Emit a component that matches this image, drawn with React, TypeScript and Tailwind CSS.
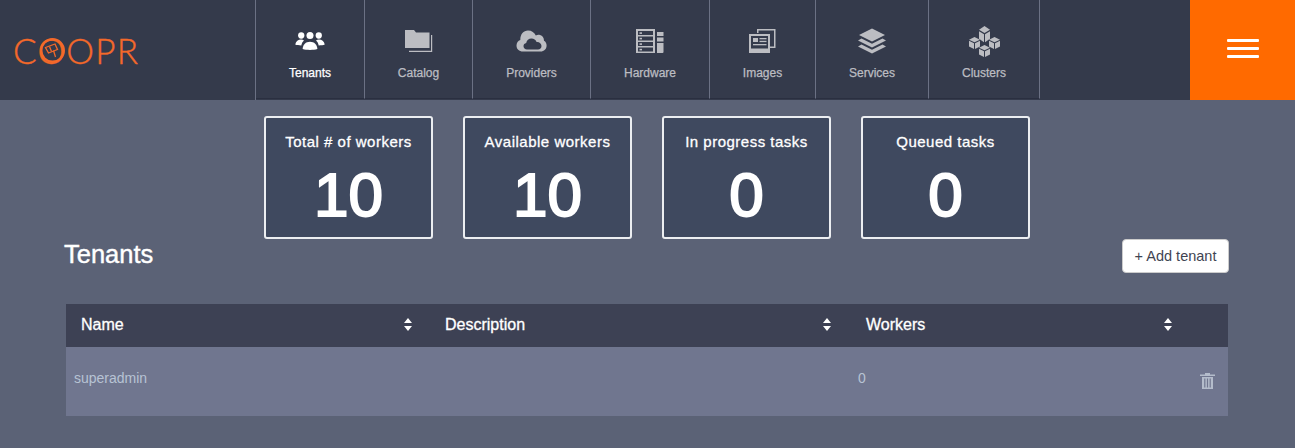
import React from 'react';

const UsersIcon = () => (
  <svg width="30" height="18" viewBox="0 0 32 19.500" fill="currentColor">
    <circle cx="6.500" cy="3.800" r="3.400" />
    <circle cx="16" cy="3.800" r="3.800" />
    <circle cx="25.500" cy="3.800" r="3.400" />
    <path d="M0 13.500c.8-3.400 3.200-5.300 6.300-5.300 1.200 0 2.300.3 3.200.9-1.500 1.300-2.500 3-2.900 5.400-2.700 0-5-.3-6.600-1z" />
    <path d="M32 13.500c-.8-3.400-3.200-5.300-6.300-5.300-1.200 0-2.300.3-3.200.9 1.500 1.300 2.500 3 2.900 5.400 2.700 0 5-.3 6.600-1z" />
    <path d="M8 18.500c.3-5 3.400-8 8-8s7.700 3 8 8c-2.200.7-5 1-8 1s-5.800-.3-8-1z" />
  </svg>
);

const FolderIcon = () => (
  <svg width="29" height="24" viewBox="0 0 29 24" fill="currentColor">
    <path d="M1 1h9l2 2.500h13.500V19H1z" />
    <path d="M27 6h1.200v17H5v-1.300h22z" />
  </svg>
);

const CloudIcon = () => (
  <svg width="31" height="24" viewBox="0 0 31 24" fill="currentColor">
    <path d="M7 22.500C3 22.500.5 20 .5 16.500c0-2.800 1.500-4.800 3.800-5.600C4.300 5 7.500 1.500 12 1.500c3.700 0 6.500 2 7.800 5 1.100-.6 2.300-.9 3.500-.7 3 .5 4.700 3 4.700 6 1.700.9 2.600 2.600 2.600 4.700 0 3.500-2.500 6-6 6z" />
    <path
      fill="#343a4b"
      d="M11 20.500c-2 0-3.500-1.300-3.500-3.200 0-1.700 1.100-2.900 2.700-3.200.4-2.700 2.500-4.600 5.300-4.600 2.400 0 4.300 1.400 5.100 3.500 2.600-.3 4.900 1.400 4.900 4.100 0 2-1.500 3.400-3.500 3.400z"
    />
  </svg>
);

const HardwareIcon = () => (
  <svg width="28" height="26" viewBox="0 0 28 26" fill="currentColor">
    <path
      fillRule="evenodd"
      d="M0 1h19v24H0zM2 3v4h15V3zm0 5.500v4h15v-4zm0 5.500v4h15v-4zm0 5.500v4h15v-4z"
    />
    <rect x="3.500" y="4.300" width="2.500" height="1.600" />
    <rect x="3.500" y="9.800" width="2.500" height="1.600" />
    <rect x="3.500" y="15.300" width="2.500" height="1.600" />
    <rect x="3.500" y="20.800" width="2.500" height="1.600" />
    <path d="M21 4h6.500v4H21zM21 9.500h6.500v4H21zM21 15h6.500v9a1 1 0 0 1-1 1H21z" />
  </svg>
);

const ImagesIcon = () => (
  <svg width="27" height="26" viewBox="0 0 27 26" fill="currentColor">
    <path d="M8 1h18.500v19H21v-1.500h4V2.500H9.500V5H8z" />
    <path fillRule="evenodd" d="M0 6h21v19H0zM2 8v12.500h17V8z" />
    <rect x="4" y="10" width="5" height="4" />
    <rect x="10.500" y="10" width="7" height="1.300" />
    <rect x="10.500" y="12.800" width="7" height="1.300" />
    <rect x="4" y="16" width="13.500" height="1.300" />
  </svg>
);

const LayersIcon = () => (
  <svg width="30" height="26" viewBox="0 0 30 26" fill="currentColor">
    <path d="M15 .5 28 7l-13 6.500L2 7z" />
    <path d="M4.500 10.600 1 12.500l14 7 14-7-3.500-1.900L15 15.800z" />
    <path d="M4.500 16.600 1 18.500l14 7 14-7-3.500-1.900L15 21.800z" />
  </svg>
);

const Cube = ({ x, y, tall }: { x: number; y: number; tall?: boolean }) => (
  <g transform={`translate(${x} ${y}) scale(1 ${tall ? 1.35 : 1})`}>
    <path d="M5.500 0 11 2.700 5.500 5.200 0 2.700z" />
    <path d="M0 3.800 5 6.200V12L0 9.400z" />
    <path d="M11 3.800 6 6.200V12l5-2.600z" />
  </g>
);

const ClustersIcon = () => (
  <svg width="31" height="31" viewBox="0 0 31 31" fill="currentColor">
    <Cube x={10} y={0} tall />
    <Cube x={0} y={11} />
    <Cube x={20} y={11} />
    <Cube x={10} y={19} />
  </svg>
);

const SortIcon = () => (
  <svg width="8" height="13" viewBox="0 0 8 13" fill="currentColor">
    <path d="M4 0 8 5H0zM4 13 0 8h8z" />
  </svg>
);

const TrashIcon = () => (
  <svg width="15" height="16" viewBox="0 0 15 16" fill="currentColor">
    <path d="M5 0h5v1.500h5V3H0V1.500h5z" />
    <path
      fillRule="evenodd"
      d="M2 4h11v12H2zM4.200 5.500v9h1.200v-9zm2.700 0v9h1.200v-9zm2.700 0v9h1.200v-9z"
    />
  </svg>
);

const navItems = [
  { label: 'Tenants', icon: <UsersIcon />, width: 'w-[109px]', active: true },
  { label: 'Catalog', icon: <FolderIcon />, width: 'w-[108px]' },
  { label: 'Providers', icon: <CloudIcon />, width: 'w-[118px]' },
  { label: 'Hardware', icon: <HardwareIcon />, width: 'w-[119px]' },
  { label: 'Images', icon: <ImagesIcon />, width: 'w-[106px]' },
  { label: 'Services', icon: <LayersIcon />, width: 'w-[113px]' },
  { label: 'Clusters', icon: <ClustersIcon />, width: 'w-[111px]' },
];

const stats = [
  { label: 'Total # of workers', value: '10' },
  { label: 'Available workers', value: '10' },
  { label: 'In progress tasks', value: '0' },
  { label: 'Queued tasks', value: '0' },
];

const App: React.FC = () => {
  return (
    <div className="h-[448px] w-[1295px] overflow-hidden bg-[#5b6276] font-['Liberation_Sans',Arial,sans-serif]">
      <header className="flex h-[100px] bg-[#343a4b]">
        <div className="flex w-[255px] items-start pl-[13px] pt-[26px]">
          <div className="relative font-['Lato',sans-serif] text-[35px] font-light leading-[48px] tracking-[1.200px] text-[#f4692a] [-webkit-text-stroke:0.400px]">
            COOPR
            <svg className="absolute left-[27px] top-[12px]" width="25" height="25" viewBox="0 0 25 25" fill="none" stroke="currentColor" strokeWidth="1.300">
              <circle cx="12.500" cy="12.500" r="11.300" strokeWidth="2.400" />
              <g transform="translate(3.500 4)">
                <path d="M2 5.500 11.500 2l2.500 5.500-9 3.500z" />
                <path d="M6 4.500 8 9.500" />
                <path d="M10 8.500 12 15" />
              </g>
            </svg>
          </div>
        </div>
        <nav className="flex h-[100px] border-l border-[#6b7184]">
          {navItems.map((item) => (
            <div
              key={item.label}
              className={`flex h-[99px] flex-col items-center border-r border-b border-r-[#6b7184] border-b-[#2a2f40] ${item.width} ${item.active ? 'text-white' : 'text-[#bcbdc2]'}`}
            >
              <div className="flex h-[60px] w-full items-center justify-center pt-[24px] pb-[2px]">{item.icon}</div>
              <span className="mt-[5px] text-xs leading-[16px] [-webkit-text-stroke:0.25px]">{item.label}</span>
            </div>
          ))}
        </nav>
        <div className="flex-1" />
        <div className="flex h-[100px] w-[105px] flex-col items-center justify-center gap-[5px] bg-[#ff6a00] pb-[3px]">
          <span className="h-[3px] w-8 rounded-[1px] bg-white" />
          <span className="h-[3px] w-8 rounded-[1px] bg-white" />
          <span className="h-[3px] w-8 rounded-[1px] bg-white" />
        </div>
      </header>

      <main>
        <div className="flex justify-center gap-[30px] pt-4 pr-[1px]">
          {stats.map((stat) => (
            <div
              key={stat.label}
              className="flex h-[123px] w-[169px] flex-col items-center rounded-[3px] border-2 border-[#eceef1] bg-[#3f495f] text-white"
            >
              <div className="mt-[14px] text-[15px] leading-[20px] tracking-[0.5px] [-webkit-text-stroke:0.3px]">{stat.label}</div>
              <div className="mt-[7px] text-[62px] leading-[72px] [-webkit-text-stroke:2px]">{stat.value}</div>
            </div>
          ))}
        </div>

        <div className="flex justify-between pl-16 pr-[66px]">
          <h1 className="mt-[1px] text-[25.500px] leading-[28px] text-white [-webkit-text-stroke:0.400px]">Tenants</h1>
          <button className="h-[34px] w-[107px] rounded border border-[#ccc] bg-white text-[14.500px] leading-[20px] text-[#3f4452]">
            + Add tenant
          </button>
        </div>

        <table className="ml-[66px] mt-[31px] w-[1162px] table-fixed">
          <thead className="bg-[#3d4154] text-white">
            <tr className="h-[43px] text-left text-base">
              <th className="w-[364px] pb-[2px] pl-[15px] pr-[18px] font-normal">
                <div className="flex items-center justify-between [-webkit-text-stroke:0.300px]">Name <SortIcon /></div>
              </th>
              <th className="w-[421px] pb-[2px] pl-[15px] pr-[20px] font-normal">
                <div className="flex items-center justify-between [-webkit-text-stroke:0.300px]">Description <SortIcon /></div>
              </th>
              <th className="w-[340px] pb-[2px] pl-[15px] pr-[19px] font-normal">
                <div className="flex items-center justify-between [-webkit-text-stroke:0.300px]">Workers <SortIcon /></div>
              </th>
              <th />
            </tr>
          </thead>
          <tbody className="bg-[#70768f] text-sm text-[#b7c3d4]">
            <tr className="h-[69px]">
              <td className="pb-[8px] pl-2">superadmin</td>
              <td />
              <td className="pb-[8px] pl-[7px]">0</td>
              <td className="pb-[2px] pr-[13px]">
                <div className="flex justify-end text-[#b4bccb]"><TrashIcon /></div>
              </td>
            </tr>
          </tbody>
        </table>
      </main>
    </div>
  );
};

export default App;
